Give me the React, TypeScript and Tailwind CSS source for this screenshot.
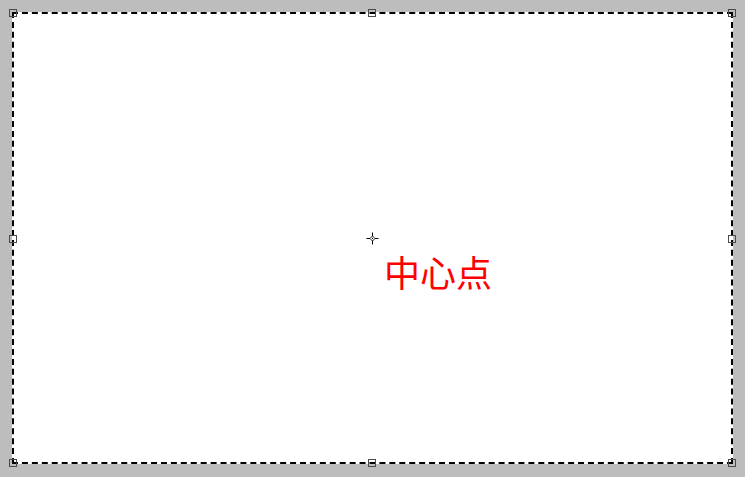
const handles = [
  "left-[-5px] top-[-5px]",
  "left-[354px] top-[-5px]",
  "right-[-5px] top-[-5px]",
  "left-[-5px] top-[221px]",
  "right-[-5px] top-[221px]",
  "left-[-5px] bottom-[-5px]",
  "left-[354px] bottom-[-5px]",
  "right-[-5px] bottom-[-5px]",
];

function Crosshair() {
  return (
    <svg width="13" height="13" viewBox="0 0 13 13" className="absolute left-[352px] top-[218px]">
      <path d="M6.5 0.5 V4 M6.5 9 V12.5 M0.5 6.5 H4 M9 6.5 H12.5" stroke="#000" strokeWidth="1" />
      <path d="M4 6.5 L6.5 4 L9 6.5 L6.5 9 Z" fill="none" stroke="#000" strokeWidth="0.9" />
      <rect x="6" y="6" width="1" height="1" fill="#000" />
    </svg>
  );
}

export default function App() {
  return (
    <div className="flex h-[477px] w-[745px] bg-[#bdbdbd] p-[12px] pb-[13px]">
      <div className="relative h-[452px] w-[722px] border-2 border-dashed border-black bg-white">
        {handles.map((h) => (
          <div key={h} className={`absolute h-[8px] w-[8px] border border-[#4a4a4a] ${h}`} />
        ))}
        <Crosshair />
        <div
          className="absolute left-[370px] top-[239px] text-[36px] leading-none text-[#ff0000]"
          style={{ fontFamily: '"Noto Sans CJK SC", sans-serif' }}
        >
          中心点
        </div>
      </div>
    </div>
  );
}
